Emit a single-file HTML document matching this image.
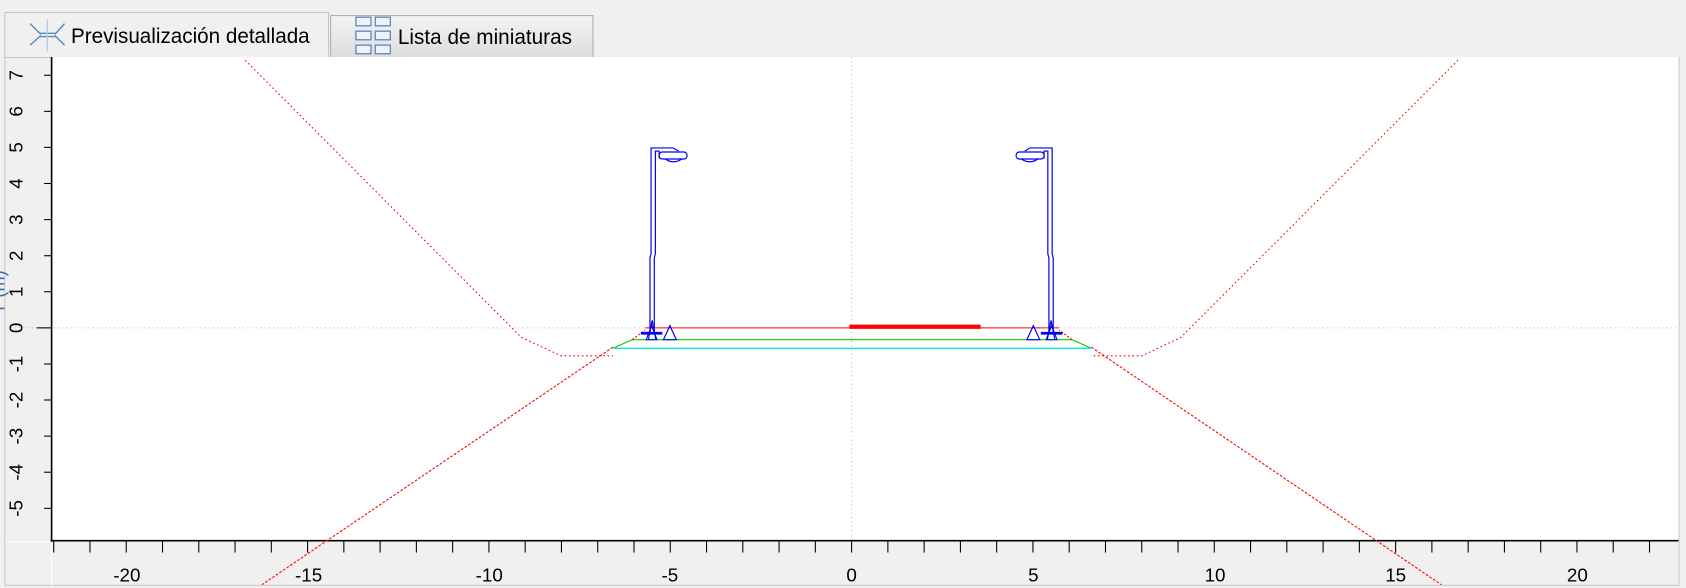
<!DOCTYPE html>
<html><head><meta charset="utf-8"><style>
html,body{margin:0;padding:0;background:#f0f0f0;overflow:hidden}
svg{display:block}
text{font-family:"Liberation Sans",sans-serif}
</style></head><body>
<svg width="1686" height="588" viewBox="0 0 1568 547" preserveAspectRatio="none" xmlns="http://www.w3.org/2000/svg">
<defs>
<linearGradient id="g2" x1="0" y1="0" x2="0" y2="1"><stop offset="0" stop-color="#f4f4f4"/><stop offset="1" stop-color="#dcdcdc"/></linearGradient>
<clipPath id="plot"><rect x="48" y="53" width="1512" height="450"/></clipPath>
<clipPath id="all"><rect x="5" y="53" width="1556" height="491"/></clipPath>
</defs>
<rect width="1568" height="547" fill="#f0f0f0"/>
<rect x="307.5" y="14.5" width="244" height="40" fill="url(#g2)" stroke="#adadad"/>
<rect x="4.5" y="11.5" width="301" height="43" fill="#f0f0f0" stroke="#c4c4c4"/>
<line x1="5" y1="54" x2="305" y2="54" stroke="#f0f0f0" stroke-width="2"/>
<g stroke="#5b86bd" stroke-width="1.3" fill="none">
<line x1="28" y1="22" x2="38" y2="32"/><line x1="28" y1="42" x2="38" y2="33"/>
<line x1="60" y1="22" x2="51" y2="32"/><line x1="60" y1="42" x2="51" y2="33"/>
<line x1="37" y1="31" x2="52" y2="31"/><line x1="37" y1="34" x2="52" y2="34"/>
<line x1="44" y1="18" x2="44" y2="48" stroke="#b8cce4"/>
</g>
<text x="66" y="40" font-size="19.5" fill="#000" textLength="222" lengthAdjust="spacingAndGlyphs">Previsualización detallada</text>
<g stroke="#5b86bd" stroke-width="1.2" fill="#eef3f9">
<rect x="331" y="16" width="14" height="8"/><rect x="349" y="16" width="14" height="8"/>
<rect x="331" y="29" width="14" height="8"/><rect x="349" y="29" width="14" height="8"/>
<rect x="331" y="42" width="14" height="8"/><rect x="349" y="42" width="14" height="8"/>
</g>
<text x="370" y="41" font-size="19.5" fill="#000" textLength="162" lengthAdjust="spacingAndGlyphs">Lista de miniaturas</text>
<rect x="4.5" y="53.5" width="1557" height="491" fill="#f0f0f0" stroke="#c8c8c8"/>
<line x1="48" y1="504" x2="48" y2="545" stroke="#fff"/>
<line x1="5" y1="504" x2="48" y2="504" stroke="#fff"/>
<rect x="48" y="53" width="1513" height="450" fill="#fff"/>
<text transform="translate(4,272) rotate(-90)" font-size="17" fill="#3d6fb0" text-anchor="middle">Y (m)</text>
<line x1="792" y1="53" x2="792" y2="503" stroke="#bbb" stroke-dasharray="1,3"/>
<line x1="10" y1="305" x2="1560" y2="305" stroke="#bbb" stroke-dasharray="1,3"/>
<line x1="48" y1="53" x2="48" y2="504" stroke="#000" stroke-width="1.5"/>
<line x1="47" y1="503" x2="1561" y2="503" stroke="#000" stroke-width="1.5"/>
<g stroke="#000" stroke-width="1">
<line x1="41" y1="70" x2="48" y2="70"/><line x1="41" y1="103.6" x2="48" y2="103.6"/>
<line x1="41" y1="137.1" x2="48" y2="137.1"/><line x1="41" y1="170.7" x2="48" y2="170.7"/>
<line x1="41" y1="204.3" x2="48" y2="204.3"/><line x1="41" y1="237.9" x2="48" y2="237.9"/>
<line x1="41" y1="271.4" x2="48" y2="271.4"/><line x1="34" y1="305" x2="48" y2="305"/>
<line x1="41" y1="338.6" x2="48" y2="338.6"/><line x1="41" y1="372.1" x2="48" y2="372.1"/>
<line x1="41" y1="405.7" x2="48" y2="405.7"/><line x1="41" y1="439.3" x2="48" y2="439.3"/>
<line x1="41" y1="472.9" x2="48" y2="472.9"/>
</g>
<g font-size="17.5" fill="#000" text-anchor="middle">
<text transform="translate(21,70) rotate(-90)">7</text>
<text transform="translate(21,103.6) rotate(-90)">6</text>
<text transform="translate(21,137.1) rotate(-90)">5</text>
<text transform="translate(21,170.7) rotate(-90)">4</text>
<text transform="translate(21,204.3) rotate(-90)">3</text>
<text transform="translate(21,237.9) rotate(-90)">2</text>
<text transform="translate(21,271.4) rotate(-90)">1</text>
<text transform="translate(21,305) rotate(-90)">0</text>
<text transform="translate(21,338.6) rotate(-90)">-1</text>
<text transform="translate(21,372.1) rotate(-90)">-2</text>
<text transform="translate(21,405.7) rotate(-90)">-3</text>
<text transform="translate(21,439.3) rotate(-90)">-4</text>
<text transform="translate(21,472.9) rotate(-90)">-5</text>
</g>
<g id="xt" stroke="#000" stroke-width="1"></g>
<g font-size="17.5" fill="#000" text-anchor="middle">
<text x="118" y="541">-20</text><text x="287" y="541">-15</text><text x="455" y="541">-10</text>
<text x="623" y="541">-5</text><text x="792" y="541">0</text><text x="961" y="541">5</text>
<text x="1130" y="541">10</text><text x="1298" y="541">15</text><text x="1467" y="541">20</text>
</g>
<g clip-path="url(#plot)" fill="none">
<polyline points="228,56 485,314 522,331 570,331" stroke="red" stroke-width="1" stroke-dasharray="1.5,2.5"/>
<polyline points="1356,56 1098,314 1062,331 1015,331" stroke="red" stroke-width="1" stroke-dasharray="1.5,2.5"/>
<line x1="600" y1="305" x2="985" y2="305" stroke="red" stroke-width="1"/>
<line x1="790" y1="304" x2="912" y2="304" stroke="red" stroke-width="4"/>
<polyline points="570,324 588,316 997,316 1015,324" stroke="#00cc00" stroke-width="1"/>
<line x1="570" y1="324" x2="1015" y2="324" stroke="#00e8e8" stroke-width="1.3"/>
<line x1="588" y1="316" x2="600" y2="307" stroke="red" stroke-width="1" stroke-dasharray="2,1.5"/>
<line x1="997" y1="316" x2="985" y2="307" stroke="red" stroke-width="1" stroke-dasharray="2,1.5"/>
</g>
<g clip-path="url(#all)" fill="none">
<line x1="570" y1="323" x2="242" y2="545" stroke="red" stroke-width="1" stroke-dasharray="2.5,1.5"/>
<line x1="1015" y1="323" x2="1342" y2="545" stroke="red" stroke-width="1" stroke-dasharray="2.5,1.5"/>
</g>
<g id="lampL" stroke="#0000ee" stroke-width="1.1" fill="none">
<path d="M604.5,309 V240 L605.5,236 V137.6 H626 L631,140.5"/>
<path d="M608.5,309 V240 L609.5,236 V140.5 H613"/>
<path d="M609.5,140.5 H613 V147.5"/>
<rect x="613" y="141.4" width="26" height="6.5" rx="3"/>
<path d="M619,148 Q626,153 634,148"/>
<line x1="596" y1="310" x2="616" y2="310" stroke-width="2.5"/>
<path d="M601,316 L606,303 L611,316 Z"/><path d="M617,316 L623,303 L629,316 Z"/>
<path d="M603,316 L606.5,298 L610,316"/>
</g>
<use href="#lampL" transform="translate(1584,0) scale(-1,1)"/>
</svg>
<script>
var g=document.getElementById('xt'),s='';
for(var i=-22;i<=22;i++){var x=792+i*33.73;s+='<line x1="'+x+'" y1="503" x2="'+x+'" y2="514" stroke="#000"/>';}
g.innerHTML=s;
</script>
</body></html>
